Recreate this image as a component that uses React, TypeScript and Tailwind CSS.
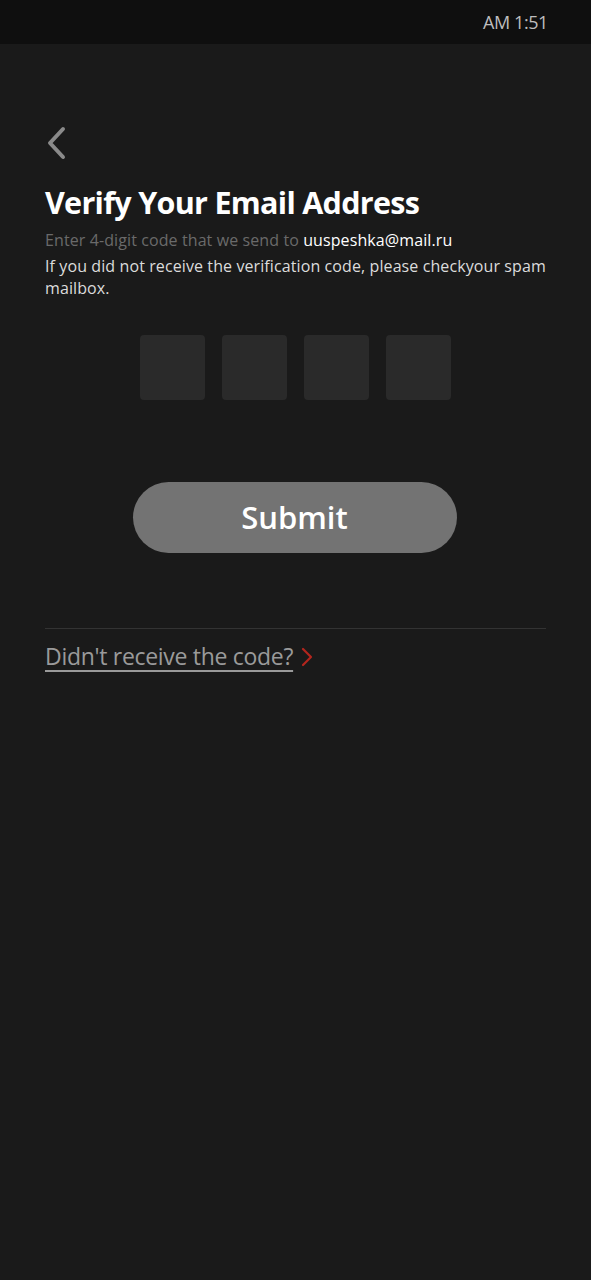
import React from 'react';

export default function App() {
  return (
    <div
      className="min-h-[1280px] w-full bg-[#1a1a1a]"
      style={{ fontFamily: '"Open Sans", "Noto Sans", sans-serif' }}
    >
      {/* Status bar */}
      <div className="flex h-[44px] items-center justify-end bg-[#0f0f0f] pr-[43px]">
        <span className="text-[18px] text-[#bdbdbd] tracking-[-0.4px]">AM 1:51</span>
      </div>

      <div className="px-[45px]">
        {/* Back */}
        <button className="mt-[82px] flex h-[34px] w-[24px] items-center">
          <svg width="22" height="34" viewBox="0 0 22 34" fill="none">
            <path d="M18 3 L5 17 L18 31" stroke="#8a8a8a" strokeWidth="4" strokeLinecap="round" strokeLinejoin="round" />
          </svg>
        </button>

        <h1 className="mt-[22px] text-[30.5px] font-bold leading-[40px] tracking-[-0.7px] text-white">
          Verify Your Email Address
        </h1>
        <p className="mt-[7px] text-[16px] leading-[22px] text-[#6a6a6a] tracking-[0.1px]">
          Enter 4-digit code that we send to <span className="text-white">uuspeshka@mail.ru</span>
        </p>
        <p className="mt-[4px] text-[16px] leading-[22px] text-[#dcdcdc] tracking-[0.1px]">
          If you did not receive the verification code, please checkyour spam mailbox.
        </p>

        {/* Code boxes */}
        <div className="mt-[36px] flex justify-center gap-[17px]">
          {[0, 1, 2, 3].map(i => (
            <div key={i} className="h-[65px] w-[65px] rounded-[4px] bg-[#2a2a2a]" />
          ))}
        </div>

        {/* Submit */}
        <div className="mt-[82px] flex justify-center pr-[2px]">
          <button className="h-[71px] w-[324px] rounded-full bg-[#737373] text-[31px] font-semibold text-white">
            Submit
          </button>
        </div>

        <div className="mt-[75px] h-[1px] bg-[#333333]" />

        <div className="mt-[12px] flex items-center gap-[8px]">
          <span className="text-[23px] leading-[30px] text-[#9a9a9a] underline decoration-[2px] underline-offset-[5px] tracking-[-0.3px]">
            Didn't receive the code?
          </span>
          <svg width="12" height="20" viewBox="0 0 12 20" fill="none" className="mt-[2px]">
            <path d="M2 2 L10 10 L2 18" stroke="#b3261e" strokeWidth="2.2" strokeLinecap="round" strokeLinejoin="round" />
          </svg>
        </div>
      </div>
    </div>
  );
}
